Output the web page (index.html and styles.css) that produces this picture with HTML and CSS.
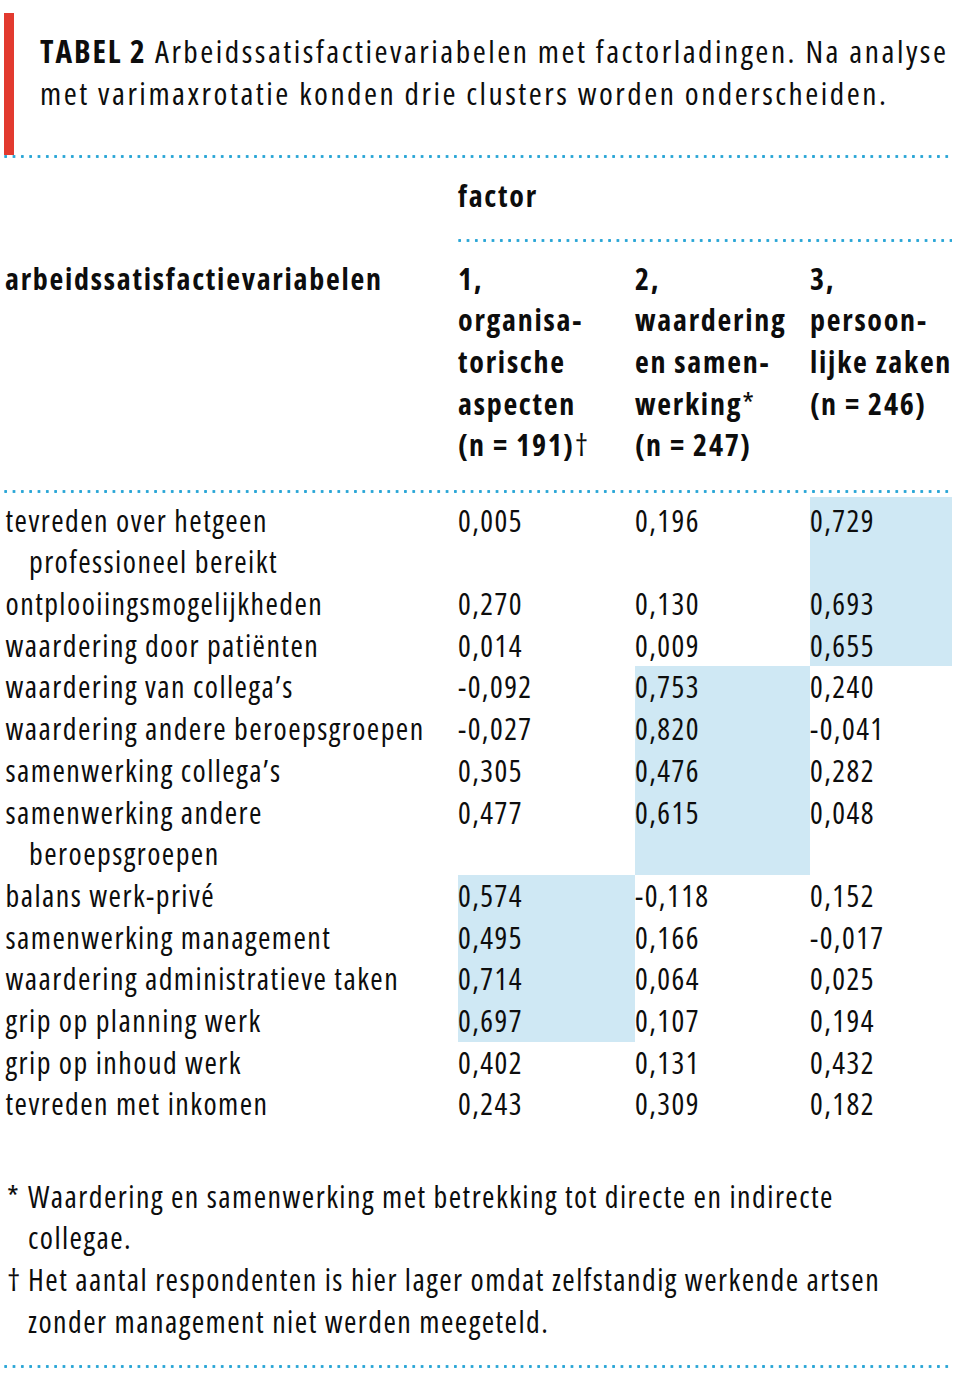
FILE: index.html
```html
<!DOCTYPE html>
<html lang="nl">
<head>
<meta charset="utf-8">
<title>Tabel 2</title>
<link rel="stylesheet" href="styles.css">
</head>
<body>
<div class="page">
  <header class="caption">
    <p class="title"><b>TABEL 2</b> Arbeidssatisfactievariabelen met factorladingen. Na analyse<br>met varimaxrotatie konden drie clusters worden onderscheiden.</p>
  </header>
  <div class="rule"></div>

  <div class="table">
    <div class="factor-cell">
      <div class="factor">factor</div>
      <div class="rule factor-rule"></div>
    </div>

    <div class="hcell hlabel">arbeidssatisfactievariabelen</div>
    <div class="hcell">1,<br>organisa-<br>torische<br>aspecten<br>(n = 191)<span class="dag">†</span></div>
    <div class="hcell">2,<br>waardering<br>en samen-<br>werking<span class="ast">*</span><br>(n = 247)</div>
    <div class="hcell">3,<br>persoon-<br>lijke zaken<br>(n = 246)</div>

    <div class="rule span-all"></div>

    <div class="label first">tevreden over hetgeen<br>professioneel bereikt</div>
    <div class="num first">0,005</div><div class="num first">0,196</div><div class="num first hl">0,729</div>

    <div class="label">ontplooiingsmogelijkheden</div>
    <div class="num">0,270</div><div class="num">0,130</div><div class="num hl">0,693</div>

    <div class="label">waardering door patiënten</div>
    <div class="num">0,014</div><div class="num">0,009</div><div class="num hl">0,655</div>

    <div class="label">waardering van collega’s</div>
    <div class="num">-0,092</div><div class="num hl">0,753</div><div class="num">0,240</div>

    <div class="label">waardering andere beroepsgroepen</div>
    <div class="num">-0,027</div><div class="num hl">0,820</div><div class="num">-0,041</div>

    <div class="label">samenwerking collega’s</div>
    <div class="num">0,305</div><div class="num hl">0,476</div><div class="num">0,282</div>

    <div class="label">samenwerking andere<br>beroepsgroepen</div>
    <div class="num">0,477</div><div class="num hl">0,615</div><div class="num">0,048</div>

    <div class="label">balans werk-privé</div>
    <div class="num hl">0,574</div><div class="num">-0,118</div><div class="num">0,152</div>

    <div class="label">samenwerking management</div>
    <div class="num hl">0,495</div><div class="num">0,166</div><div class="num">-0,017</div>

    <div class="label">waardering administratieve taken</div>
    <div class="num hl">0,714</div><div class="num">0,064</div><div class="num">0,025</div>

    <div class="label">grip op planning werk</div>
    <div class="num hl">0,697</div><div class="num">0,107</div><div class="num">0,194</div>

    <div class="label">grip op inhoud werk</div>
    <div class="num">0,402</div><div class="num">0,131</div><div class="num">0,432</div>

    <div class="label">tevreden met inkomen</div>
    <div class="num">0,243</div><div class="num">0,309</div><div class="num">0,182</div>
  </div>

  <div class="notes">
    <span class="mark">*</span><span class="note">Waardering en samenwerking met betrekking tot directe en indirecte<br>collegae.</span>
    <span class="mark">†</span><span class="note">Het aantal respondenten is hier lager omdat zelfstandig werkende artsen<br>zonder management niet werden meegeteld.</span>
  </div>
  <div class="rule"></div>
</div>
</body>
</html>
```

FILE: styles.css
```css
html, body {
  margin: 0;
  padding: 0;
  background: #ffffff;
}

body {
  font-family: "Open Sans", "DejaVu Sans Condensed", sans-serif;
  font-stretch: 75%;
  font-size: 30px;
  letter-spacing: 1.45px;
  line-height: 41.7px;
  color: #0d0d0d;
}

.page {
  width: 948px;
  margin-left: 4px;
}

.caption {
  margin-top: 13px;
  border-left: 10px solid #e23a2f;
  padding: 17px 0 41px 26px;
}

.title {
  margin: 0;
  font-size: 31.5px;
  letter-spacing: 2.5px;
  line-height: 42px;
  white-space: nowrap;
}

.title b {
  font-weight: 700;
  letter-spacing: 1.9px;
}

.rule {
  height: 3px;
  background-image: radial-gradient(circle, #2ba6d6 1.3px, rgba(43,166,214,0) 1.8px);
  background-size: 8.33px 3px;
  background-repeat: repeat-x;
  background-position: -2.5px 0;
}

.table {
  display: grid;
  grid-template-columns: 454px 177px 175px 142px;
}

.factor-cell {
  grid-column: 2 / 5;
  padding-top: 17.45px;
}

.factor {
  font-weight: 700;
  letter-spacing: 1.75px;
}

.factor-rule {
  margin-top: 21.55px;
}

.hcell {
  font-weight: 700;
  letter-spacing: 1.75px;
  padding: 15.95px 0 24.05px;
  white-space: nowrap;
}

.hlabel {
  padding-left: 1px;
}

.dag, .ast {
  font-weight: 400;
}

.span-all {
  grid-column: 1 / 5;
}

.label {
  padding-left: 25px;
  text-indent: -23.5px;
  white-space: nowrap;
}

.first {
  margin-top: 3.45px;
  padding-top: 3px;
}

.num {
  white-space: nowrap;
}

.hl {
  background: #cfe8f4;
}

.notes {
  display: grid;
  grid-template-columns: 21px 1fr;
  padding-left: 3px;
  margin-top: 50.5px;
  margin-bottom: 22.3px;
  white-space: nowrap;
}

.mark {
  display: block;
  letter-spacing: 0;
}

.note {
  display: block;
}
```
